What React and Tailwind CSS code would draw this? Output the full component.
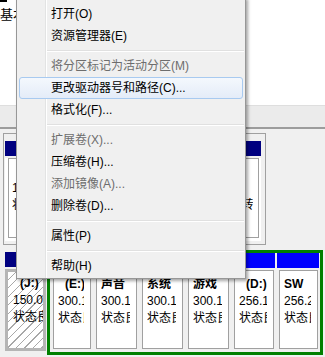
import React from 'react';

const menuItems = [
  { label: '打开(O)' },
  { label: '资源管理器(E)' },
  { sep: true },
  { label: '将分区标记为活动分区(M)', disabled: true },
  { label: '更改驱动器号和路径(C)...', hot: true },
  { label: '格式化(F)...' },
  { sep: true },
  { label: '扩展卷(X)...', disabled: true },
  { label: '压缩卷(H)...' },
  { label: '添加镜像(A)...', disabled: true },
  { label: '删除卷(D)...' },
  { sep: true },
  { label: '属性(P)' },
  { sep: true },
  { label: '帮助(H)' },
];

const logical = [
  { name: '(E:)', drive: true, size: '300.12 GB NTFS', w: 'w-[43px]' },
  { name: '声音', size: '300.12 GB NTFS', w: 'w-[46px]' },
  { name: '系统', size: '300.12 GB NTFS', w: 'w-[46px]' },
  { name: '游戏', size: '300.12 GB NTFS', w: 'w-[46px]' },
  { name: '(D:)', drive: true, size: '256.14 GB NTFS', w: 'w-[45px]' },
  { name: 'SW', size: '256.29 GB NTFS', w: 'w-[44px]' },
];

function ContextMenu() {
  return (
    <div className="absolute left-[16px] top-[-3px] w-[230px] border border-[#979797] bg-[#f0f0f0] pt-[5px] pb-[1px] shadow-[2px_2px_3px_rgba(0,0,0,0.35)]">
      {/* icon gutter */}
      <div className="absolute top-0 bottom-0 left-[28px] w-[2px] border-l border-[#e2e3e3] border-r border-r-white" />
      {menuItems.map((it, i) =>
        it.sep ? (
          <div key={i} className="relative h-[8px] flex items-center ml-[30px] mr-[1px]">
            <div className="w-full h-[2px] border-t border-[#e0e0e0] border-b border-b-white" />
          </div>
        ) : (
          <div
            key={i}
            className={
              'relative mx-[2px] h-[22px] rounded-[3px] border pl-[31px] leading-[20px] whitespace-nowrap ' +
              (it.hot
                ? 'border-[#a8caf0] bg-gradient-to-b from-[#f4f8fd] to-[#e4ecf8] '
                : 'border-transparent ') +
              (it.disabled ? 'text-[#6d6d6d]' : 'text-black')
            }
          >
            {it.label}
          </div>
        )
      )}
    </div>
  );
}

function LogicalCell({ c }) {
  return (
    <div className={c.w + ' flex flex-col shrink-0'}>
      <div className="h-[15px] bg-[#0000ff] mx-[1px]" />
      <div className="flex-1 mt-[2px] mb-[3px] ml-[3px] mr-[2px] border border-[#a0a0a0] bg-white">
        <div className="ml-[4px] mr-[6px] pt-[5px] overflow-hidden whitespace-nowrap leading-[17px]">
          <div className={'font-bold ' + (c.drive ? 'pl-[7px]' : '')}>{c.name}</div>
          <div>{c.size}</div>
          <div>状态良好 (逻辑驱动器)</div>
        </div>
      </div>
    </div>
  );
}

export default function App() {
  return (
    <div className="relative w-[325px] h-[357px] overflow-hidden bg-[#f0f0f0] text-[12px] text-black font-[family-name:'Liberation_Sans','Noto_Sans_CJK_SC',sans-serif]">
      {/* upper list pane */}
      <div className="h-[105px] bg-white">
        <div className="w-[7px] h-[2px] bg-black" />
        <div className="pt-[5px] text-[13px] leading-[15px] whitespace-nowrap">基本</div>
      </div>
      <div className="h-[22px] bg-[#ebebeb] border-t border-[#dedede]" />
      <div className="h-[2px] bg-[#9c9c9c]" />

      {/* disk row 1 */}
      <div className="mt-[4px] ml-[3px] w-[263px] h-[112px] border border-[#a0a0a0] pt-[7px] pl-[1px] pr-[4px] pb-[3px] flex flex-col">
        <div className="h-[15px] bg-[#000080]" />
        <div className="flex-1 mt-[2px] bg-white pl-[3px] pr-[2px] pb-[3px] flex">
          <div className="flex-1 min-w-0 border border-[#a0a0a0]">
            <div className="ml-[3px] mr-[5px] pt-[4px] overflow-hidden whitespace-nowrap leading-[17px]">
              <div className="font-bold">&nbsp;</div>
              <div>100 MB NTFS</div>
              <div className="tracking-[0.13px]">状态良好 (系统, 启动, 页面文件, 活动, 故障转储, 主分区)</div>
            </div>
          </div>
        </div>
      </div>

      {/* disk row 2 */}
      <div className="mt-[5px] ml-[3px] h-[105px] flex">
        <div className="w-[43px] pt-[2px] pl-[2px] flex flex-col">
          <div className="h-[15px] bg-[#000080] mr-[1px]" />
          <div className="flex-1 mt-[2px] mb-[4px] border-[3px] border-[#b5b5b5] bg-[repeating-linear-gradient(135deg,#ffffff_0px,#ffffff_5px,#a8a8a8_5px,#a8a8a8_6px)] overflow-hidden">
            <div className="pl-[5px] pt-[3px] leading-[17px] whitespace-nowrap">
              <div className="font-bold pl-[7px]">(J:)</div>
              <div>150.00 GB NTFS</div>
              <div>状态良好 (主分区)</div>
            </div>
          </div>
        </div>
        <div className="ml-[1px] w-[276px] border-[3px] border-[#008000] flex">
          {logical.map((c, i) => (
            <LogicalCell key={i} c={c} />
          ))}
        </div>
      </div>

      <ContextMenu />
    </div>
  );
}
